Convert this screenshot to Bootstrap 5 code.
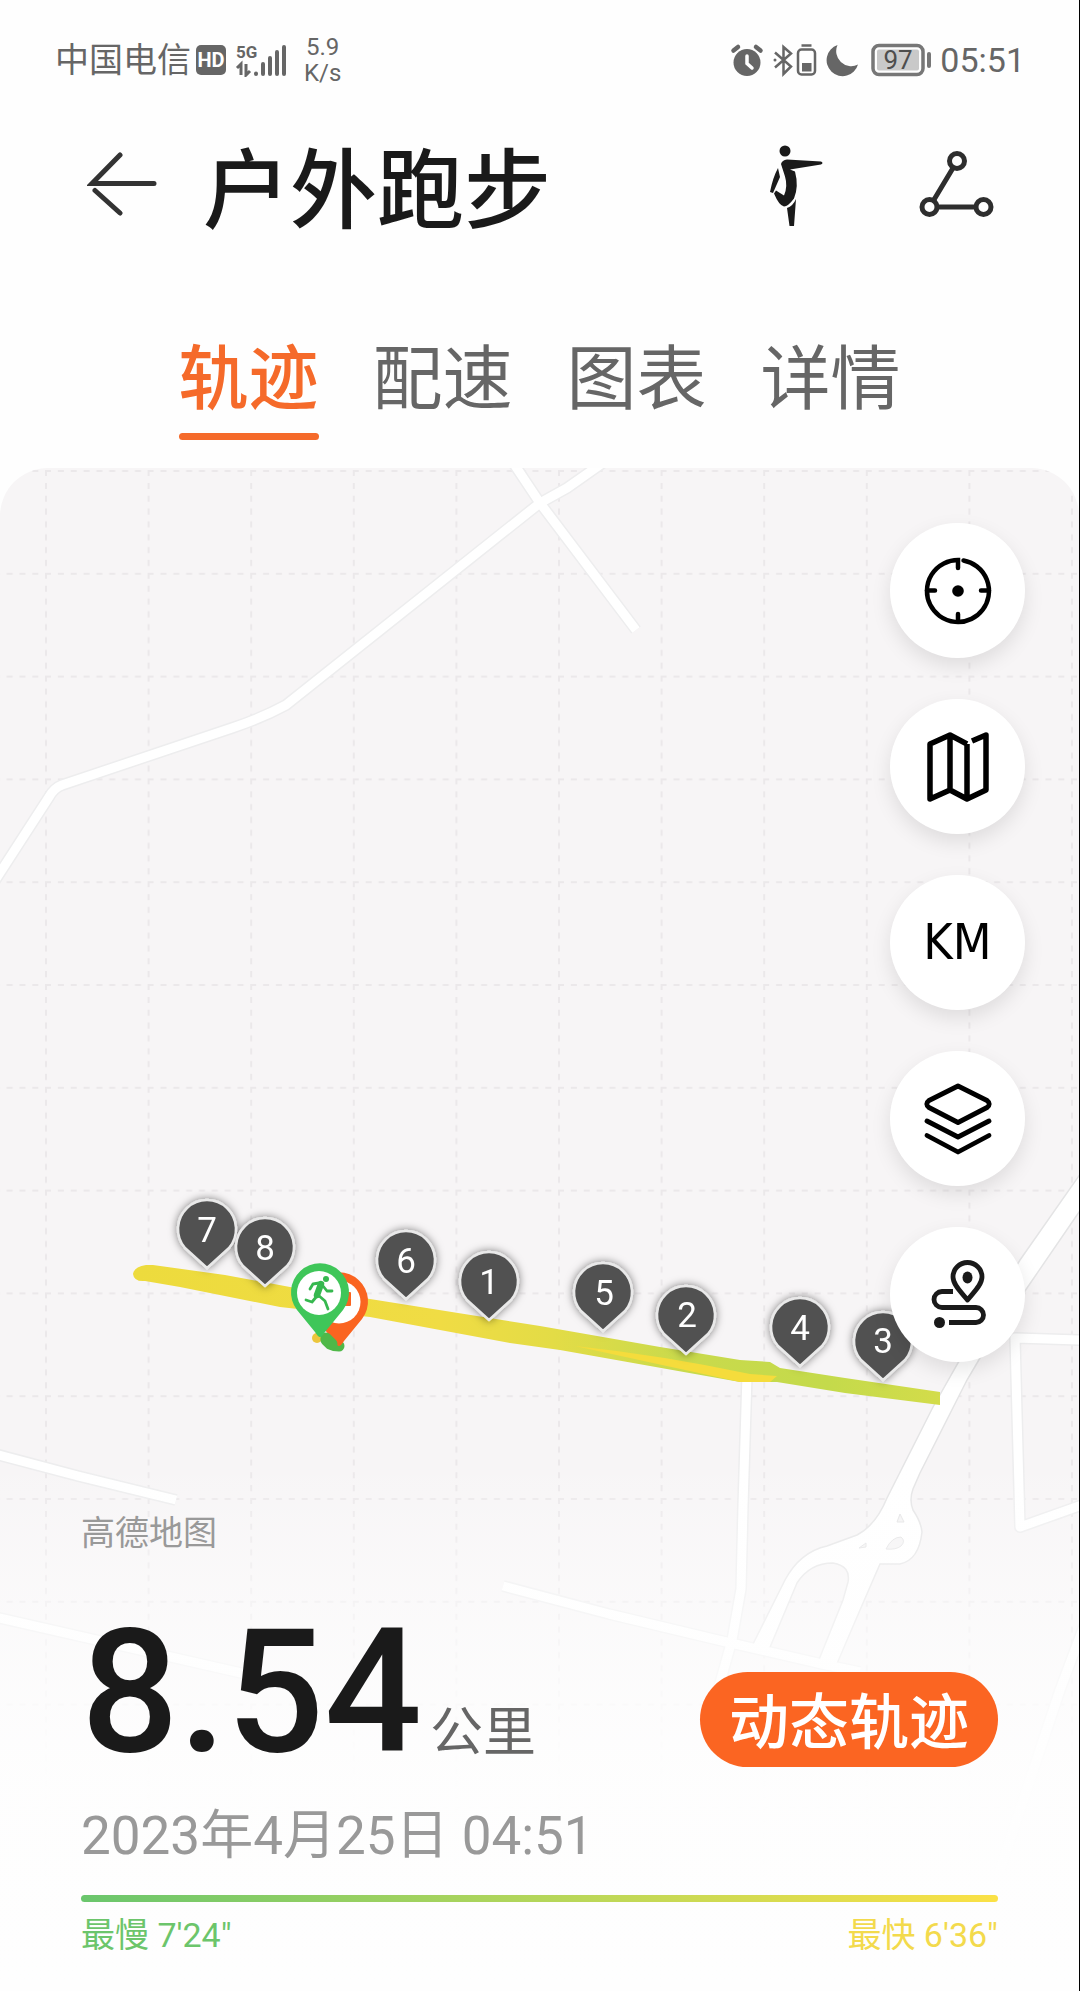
<!DOCTYPE html>
<html lang="zh-CN">
<head>
<meta charset="utf-8">
<meta name="viewport" content="width=device-width, initial-scale=1">
<title>户外跑步</title>
<link href="https://cdn.jsdelivr.net/npm/bootstrap@5.3.0/dist/css/bootstrap.min.css" rel="stylesheet">
<style>
:root { --run-orange: #fb6522; --run-ink: #1a1a1a; --run-grey: #666; --run-soft: #999; }
body { font-family: Roboto, "Noto Sans CJK SC", sans-serif; color: var(--run-ink); background: #fefefe; border-right: 1px solid #000; }
svg { display: block; flex: none; }
.status-row { padding: 34px 54px 0 55px; color: var(--run-grey); line-height: 52px; }
.carrier { font-size: 34px; }
.hd-chip { width: 30px; height: 30px; margin-left: 5px; border-radius: 5px; background: var(--run-grey); color: #fff; font-size: 20px; font-weight: 700; line-height: 30px; }
.net-speed { font-size: 24px; line-height: 26px; margin-left: 16px; }
.clock { font-size: 34px; }
.title-row { padding: 54px 83px 0 87px; }
.title-row h1 { font-size: 87px; line-height: 88px; font-weight: 500; padding: 8px 0 0 44px; }
.plain-btn { border: 0; background: none; padding: 0; color: #2b2b2b; }
.share-btn { margin-left: 92px; }
.tab-row { padding: 103px 0 28px; gap: 54px; }
.tab-row .nav-link { padding: 0 0 12px; border-bottom: 7px solid transparent; border-radius: 0; font-size: 70px; line-height: 82px; color: var(--run-grey); }
.tab-row .nav-link.active { color: #f56a2a; font-weight: 500; position: relative; }
.tab-row .nav-link.active::after { content: ""; position: absolute; left: 0; right: 0; bottom: -7px; height: 7px; border-radius: 4px; background: #f56a2a; }
.map-area { border-radius: 48px 48px 0 0; background: #f7f5f6; overflow: hidden; }
.map-canvas { position: absolute; inset: 0; width: 100%; height: 100%; }
.map-fade { position: absolute; left: 0; right: 0; bottom: 0; height: 530px; background: linear-gradient(to bottom, rgba(254,254,254,0) 0%, rgba(254,254,254,.42) 22%, rgba(254,254,254,.75) 42%, rgba(254,254,254,.96) 60%, #fefefe 100%); }
.tool-col { padding: 55px 54px 0 0; gap: 41px; }
.tool-btn { width: 135px; height: 135px; border: 0; border-radius: 50%; background: #fff; color: #000; padding: 0; box-shadow: 0 8px 20px rgba(0,0,0,.10); }
.km-label { font-family: "DejaVu Sans Condensed", "DejaVu Sans", sans-serif; font-size: 50px; line-height: 135px; }
.info-panel { padding: 0 81px 36px; }
.map-credit { font-size: 34px; line-height: 40px; color: var(--run-soft); margin-bottom: 64px; }
.distance { font-size: 172px; line-height: 150px; font-weight: 500; }
.distance-unit { font-size: 53px; line-height: 60px; color: var(--run-grey); }
.replay-btn { height: 95px; padding: 9px 29px 0; border: 0; border-radius: 48px; background: var(--run-orange); color: #fff; font-size: 60px; font-weight: 500; line-height: 86px; }
.run-date { font-size: 53px; line-height: 64px; color: var(--run-soft); margin-top: 37px; }
.pace-bar { height: 7px; border-radius: 4px; margin-top: 27px; background: linear-gradient(to right, #6ac66d, #b4d65a 50%, #fbe146); }
.pace-ends { margin-top: 13px; font-size: 34px; line-height: 40px; }
.pace-slow { color: #6cc56b; }
.pace-fast { color: #f3da4c; }
.pin-num { font-size: 35px; fill: #fff; text-anchor: middle; }
</style>
<script src="https://cdn.jsdelivr.net/npm/bootstrap@5.3.0/dist/js/bootstrap.bundle.min.js"></script>
</head>
<body class="d-flex flex-column min-vh-100">

<div class="status-row d-flex align-items-center justify-content-between">
  <div class="d-flex align-items-center">
    <span class="carrier">中国电信</span>
    <span class="hd-chip text-center">HD</span>
    <svg class="ms-2" width="54" height="34" viewBox="0 0 54 34" role="img" aria-label="5G 信号">
      <text x="2" y="15" font-size="17" font-weight="700" fill="#666">5G</text>
      <g stroke="#666" stroke-width="4" stroke-linecap="round"><path d="M22 30.500v.5M29 21v10M36 15v16M43 9v22M50 4v27"/></g>
      <path d="M3 25l4-4v11M12 21v11l4-4" fill="none" stroke="#666" stroke-width="3"/>
    </svg>
    <div class="net-speed text-center">5.9<br>K/s</div>
  </div>
  <div class="d-flex align-items-center">
    <svg width="34" height="34" viewBox="0 0 34 34" fill="#666" aria-hidden="true"><circle cx="17" cy="19.500" r="13.500"/><path d="M3.500 7.500L8 4M26 4l4.500 3.500" stroke="#666" stroke-width="4.500" stroke-linecap="round"/><path d="M17 13v7.500l5 4.500" fill="none" stroke="#fff" stroke-width="3.500" stroke-linecap="round"/></svg>
    <svg width="46" height="34" viewBox="0 0 46 34" class="ms-2" fill="none" stroke="#666" stroke-width="2.500" aria-hidden="true"><path d="M3 9.500l16 14-7.500 7.500V4L19 10.500l-16 14" /><circle cx="3" cy="17" r="1.500" fill="#666" stroke="none"/><rect x="26" y="6.500" width="17" height="25" rx="3.500"/><path d="M29.500 2.500h10"/><path d="M30 20h9.500v8.500H30z" fill="#666" stroke="none"/></svg>
    <svg width="34" height="34" viewBox="0 0 34 34" class="ms-2" aria-hidden="true"><path d="M11.500 2A16 16 0 1 0 32 21.500A15 15 0 0 1 11.500 2z" fill="#666"/></svg>
    <svg width="64" height="34" viewBox="-2 0 64 34" class="ms-2" role="img" aria-label="电量 97"><rect x="3" y="2.500" width="50" height="29" rx="6" fill="none" stroke="#777" stroke-width="3.500"/><rect x="7" y="6.500" width="42" height="21" rx="2" fill="#c9c9c9"/><path d="M59 11v12" stroke="#777" stroke-width="4" stroke-linecap="round"/><text x="28" y="26" font-size="26" text-anchor="middle" fill="#4d4d4d">97</text></svg>
    <span class="clock ms-2">05:51</span>
  </div>
</div>

<header class="title-row d-flex align-items-center">
  <button type="button" class="plain-btn" aria-label="返回">
    <svg width="72" height="72" viewBox="0 0 72 72" fill="none" stroke="#333" stroke-width="5" stroke-linecap="round"><path d="M33 3L5 31.500H67M8 38.500L33 61"/></svg>
  </button>
  <h1 class="mb-0 flex-grow-1">户外跑步</h1>
  <button type="button" class="plain-btn" aria-label="动作">
    <svg width="60" height="84" viewBox="0 2 60 84" overflow="visible" fill="#1a1a1a"><circle cx="19" cy="7" r="5.500"/><path d="M15 20q1-4 6-4.500l34 2q3 1.500 0 3L24 25.500l5 2q4 15-1 27-6 8-10 8-5-1-10-13l2-3 8 5q4-9 1-19z"/><path d="M12 24l2 9-7 16-3-1q3-15 8-24zM30 55l-2 27h-4.500L21 64q6-2 9-9z"/></svg>
  </button>
  <button type="button" class="plain-btn share-btn" aria-label="分享">
    <svg width="78" height="78" viewBox="0 2 78 78" fill="none" stroke="#2e2e2e" stroke-width="5"><circle cx="39" cy="14" r="7.500"/><circle cx="11.500" cy="60" r="7.500"/><circle cx="65.500" cy="60" r="7.500"/><path d="M35 21L15.500 53.500M19 60h39"/></svg>
  </button>
</header>

<nav class="tab-row nav justify-content-center">
  <a class="nav-link active" href="#track" aria-current="page">轨迹</a>
  <a class="nav-link" href="#pace">配速</a>
  <a class="nav-link" href="#chart">图表</a>
  <a class="nav-link" href="#detail">详情</a>
</nav>

<main class="map-area position-relative flex-grow-1 d-flex flex-column">
  <svg class="map-canvas" viewBox="0 468 1079 1523" preserveAspectRatio="xMidYMin slice" role="img" aria-label="跑步轨迹地图">
    <defs>
      <pattern id="grid" x="45" y="470" width="102.600" height="102.800" patternUnits="userSpaceOnUse">
        <path d="M1 0v103M0 1h103" stroke="#ebe8ea" stroke-width="2" stroke-dasharray="6 6.850"/>
      </pattern>
      <linearGradient id="trackTint" gradientUnits="userSpaceOnUse" x1="134" y1="0" x2="940" y2="0">
        <stop offset="0" stop-color="#eddb3d"/><stop offset=".38" stop-color="#f0dc44"/><stop offset=".52" stop-color="#e3dc46"/><stop offset=".68" stop-color="#c9da4c"/><stop offset=".86" stop-color="#c4da4b"/><stop offset="1" stop-color="#d3dc4a"/>
      </linearGradient>
      <filter id="pinShade" x="-40%" y="-40%" width="180%" height="180%"><feDropShadow dx="0" dy="0" stdDeviation="4" flood-color="#000" flood-opacity=".5"/></filter>
      <path id="pinShape" d="M0 0L-22 -20A29 29 0 1 1 22 -20Z" />
      <path id="drop" d="M0 0Q-2 0 -5 -5L-23 -27A29 29 0 1 1 23 -27L5 -5Q2 0 0 0Z"/>
      <g id="roads" fill="none" stroke-linejoin="round">
        <path d="M-6 882L49 797Q54 788 62 785L232 728Q262 718 286 705L540 503 567 488 604 462"/>
        <path d="M510 458L540 503 636 630"/>
        <path d="M-5 1454L78 1476 176 1500M-5 1617L250 1675M503 1586L609 1614 722 1641 822 1664 860 1672"/>
        <path d="M747 1375L743 1506 741 1589 732 1640 718 1690"/>
        <path d="M1082 1340L1015 1338 1020 1527 1082 1505"/>
        <path d="M1090 1610L1060 1690 1030 1780 1000 1870"/>
      </g>
    </defs>
    <rect y="468" width="1080" height="1523" fill="url(#grid)"/>
    <use href="#roads" stroke="#ededee" stroke-width="12"/>
    <path d="M1090 1160L1020 1260 958 1363 933 1407 887 1498Q876 1525 857 1535L827 1546Q800 1552 785 1580L751 1648 768 1652 797 1583Q810 1563 833 1563 851 1566 848 1582L843 1600 818 1662 836 1666 860 1610 880 1564H900Q919 1560 922 1532 921 1522 913 1510 909 1500 913 1489L920 1473 967 1380 980 1358 1027 1288 1090 1196Z" fill="#fff" stroke="#e4e4e5" stroke-width="1.500"/>
    <use href="#roads" stroke="#fff" stroke-width="9"/>
    <path d="M886 1549q6-12 15-12 5 4 0 9-5 4-15 3zM897 1522l3-8 4 8zM859 1548l7-5v4z" fill="#f4f3f4" stroke="#e2e2e3"/>

    <path d="M146 1265Q134 1267 133 1274 134 1282 145 1281L180 1287 280 1307 370 1317 510 1343 560 1350 740 1382 777 1382 845 1393 940 1405V1392L845 1378 780 1368 770 1362 740 1360 660 1347 540 1326 370 1299 290 1287 225 1275 153 1265Z" fill="url(#trackTint)"/>
    <path d="M575 1346Q660 1355 750 1374L777 1376 770 1382 740 1382Z" fill="#f5dc3c"/>
    <circle cx="317" cy="1338" r="5" fill="#ecc63c"/>

    <g filter="url(#pinShade)" fill="#515151" stroke="#e9e9e9" stroke-width="2.500" stroke-linejoin="round">
      <use href="#pinShape" x="207" y="1268"/><use href="#pinShape" x="265" y="1286"/>
      <use href="#pinShape" x="406" y="1299"/><use href="#pinShape" x="489" y="1320"/>
      <use href="#pinShape" x="603" y="1331"/><use href="#pinShape" x="686" y="1354"/>
      <use href="#pinShape" x="800" y="1366"/><use href="#pinShape" x="883" y="1380"/>
    </g>
    <g class="pin-num">
      <text x="207" y="1242">7</text><text x="265" y="1260">8</text><text x="406" y="1273">6</text><text x="489" y="1294">1</text>
      <text x="604" y="1305">5</text><text x="687" y="1327">2</text><text x="800" y="1340">4</text><text x="883" y="1353">3</text>
    </g>

    <path d="M326 1340l4 4q4 2 9 2" fill="none" stroke="#4fb848" stroke-width="11" stroke-linecap="round"/>
    <use href="#drop" x="339" y="1346" fill="#fa6420"/>
    <path d="M326 1338l6 6" stroke="#4fb848" stroke-width="11" stroke-linecap="round"/>
    <circle cx="339" cy="1302" r="21.500" fill="#fff"/><rect x="329" y="1292" width="22" height="14" rx="1" fill="#fa6420"/>
    <use href="#drop" x="320" y="1337" fill="#3fc659"/>
    <circle cx="319" cy="1293" r="22" fill="#fff"/>
    <g fill="none" stroke="#36b84f" stroke-linecap="round" stroke-linejoin="round">
      <circle cx="326" cy="1279" r="3" fill="#36b84f" stroke="none"/>
      <path d="M321 1284L317 1295" stroke-width="6.500"/>
      <path d="M319 1283L313 1284 310 1289M323 1286L327 1291 332 1291M318 1295L325 1301 328 1309M317 1296L312 1302 306 1300" stroke-width="2.800"/>
    </g>
  </svg>
  <div class="map-fade"></div>

  <div class="tool-col position-relative d-flex flex-column align-self-end">
    <button type="button" class="tool-btn d-flex align-items-center justify-content-center" aria-label="定位">
      <svg width="70" height="70" viewBox="0 0 70 70" fill="none" stroke="#000" stroke-width="4.500" stroke-linecap="round"><path d="M35 12V4A31 31 0 1 0 40.500 4.500"/><path d="M4 34.500h8M58 34.500h8M35 58v7"/><circle cx="35" cy="35" r="5.800" fill="#000" stroke="none"/></svg>
    </button>
    <button type="button" class="tool-btn d-flex align-items-center justify-content-center" aria-label="地图类型">
      <svg width="70" height="76" viewBox="0 0 70 76" fill="none" stroke="#000" stroke-width="5.500" stroke-linejoin="round"><path d="M44 15L27 6 7 15V70L27 61 44 70 63 61V6L49 12M27 6V61M44 15V70"/></svg>
    </button>
    <button type="button" class="tool-btn km-label" aria-label="公里标记">KM</button>
    <button type="button" class="tool-btn d-flex align-items-center justify-content-center" aria-label="图层">
      <svg width="70" height="76" viewBox="0 0 70 76" fill="none" stroke="#000" stroke-width="4.800" stroke-linecap="round" stroke-linejoin="round"><path d="M35 5L6 19.500Q1.500 23 6 26.500L35 41.500 64 26.500Q68.500 23 64 19.500ZM4 40L35 56 66 40M4 54.500L35 71 66 54.500"/></svg>
    </button>
    <button type="button" class="tool-btn d-flex align-items-center justify-content-center" aria-label="轨迹显示">
      <svg width="70" height="76" viewBox="1 0 70 76" fill="none" stroke="#1a1a1a" stroke-width="4.800" stroke-linejoin="round"><path d="M45.500 43C40 36 31 28 31 20A14.500 14.500 0 0 1 60 20C60 28 51 36 45.500 43Z"/><ellipse cx="45.500" cy="20.500" rx="5" ry="6" fill="#1a1a1a" stroke="none"/><path d="M31 34.500H20A7.800 7.800 0 0 0 20 50.500H54A7 7 0 0 1 54 65.500H27"/><circle cx="17.500" cy="65.500" r="5.500" fill="#1a1a1a" stroke="none"/></svg>
    </button>
  </div>

  <section class="info-panel position-relative mt-auto">
    <div class="map-credit">高德地图</div>
    <div class="d-flex align-items-end justify-content-between">
      <div class="distance">8.54<span class="distance-unit fw-normal ms-2">公里</span></div>
      <button type="button" class="replay-btn">动态轨迹</button>
    </div>
    <div class="run-date">2023年4月25日 04:51</div>
    <div class="pace-bar"></div>
    <div class="pace-ends d-flex justify-content-between">
      <span class="pace-slow">最慢 7'24"</span>
      <span class="pace-fast">最快 6'36"</span>
    </div>
  </section>
</main>
</body>
</html>
